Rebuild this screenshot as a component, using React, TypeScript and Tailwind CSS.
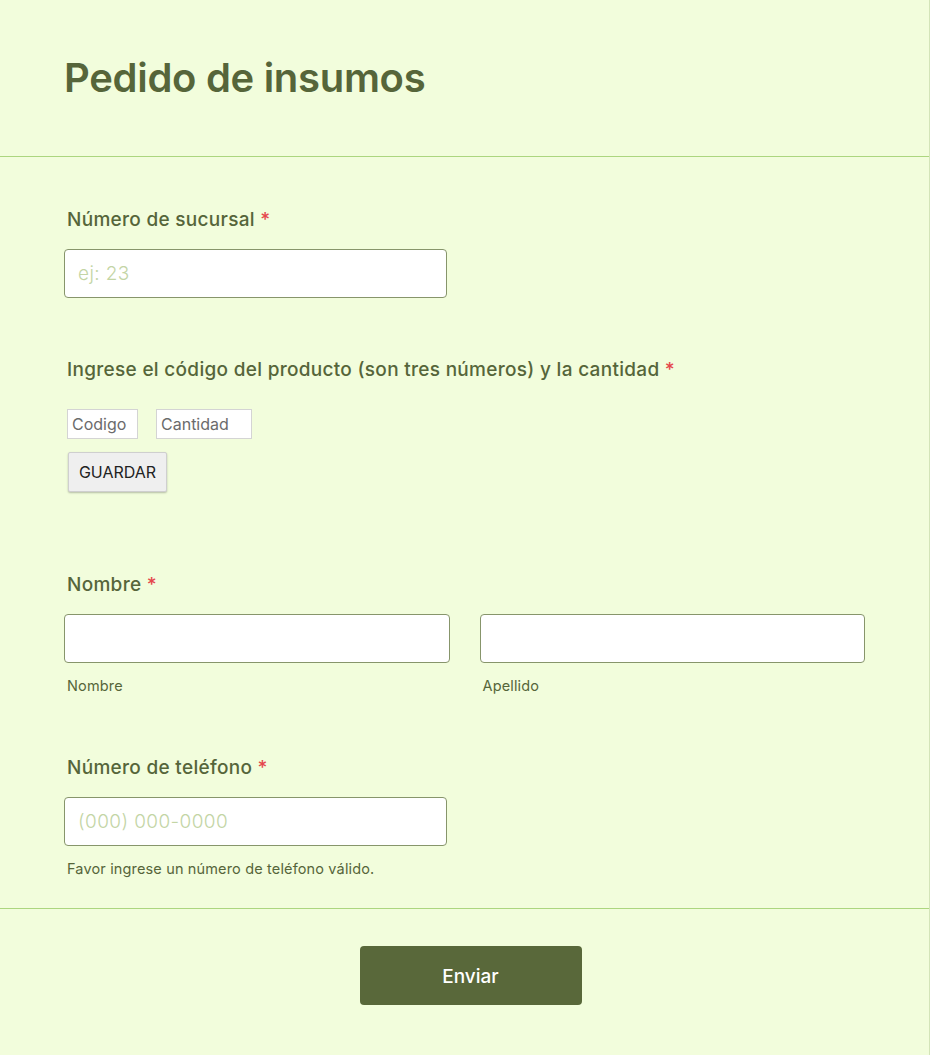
const olive = "text-[#56653a]";

function Label({ children }: { children: React.ReactNode }) {
  return (
    <label className={`block text-[19px] leading-6 font-medium tracking-[0.3px] ${olive}`}>
      {children} <span className="text-[#e5484d]">*</span>
    </label>
  );
}

export default function App() {
  return (
    <div className="min-h-[1055px] w-[930px] bg-[#f2fddc] border-r border-[#d3e4b8] font-['Inter',sans-serif]">
      <header className="h-[157px] flex items-center px-16 border-b border-[#acd67f]">
        <h1 className={`text-[40px] font-semibold tracking-[-0.3px] ${olive}`}>Pedido de insumos</h1>
      </header>

      <div className="px-16 pt-[51px] pb-[29px] border-b border-[#acd67f]">
        <div className="pl-[3px]">
          <Label>Número de sucursal</Label>
        </div>
        <input
          className="mt-[17px] block w-[383px] h-[49px] rounded-[4px] border border-[#87956b] bg-white px-[13px] text-[19px] tracking-[0.4px] font-light placeholder:text-[#c3d5a5] outline-none"
          placeholder="ej: 23"
        />

        <div className="mt-[60px] pl-[3px]">
          <Label>Ingrese el código del producto (son tres números) y la cantidad</Label>
          <div className="mt-[27px] flex gap-[18px]">
            <input
              className="w-[71px] h-[30px] border border-[#d4d4d4] bg-white px-[4px] text-[16px] text-[#555] placeholder:text-[#6b6b6b] outline-none"
              placeholder="Codigo"
            />
            <input
              className="w-[96px] h-[30px] border border-[#d4d4d4] bg-white px-[4px] text-[16px] text-[#555] placeholder:text-[#6b6b6b] outline-none"
              placeholder="Cantidad"
            />
          </div>
          <button className="mt-[13px] ml-px w-[99px] h-[40px] rounded-[2px] border border-[#cfcfcf] bg-[#efefef] shadow-[0_1px_2px_rgba(0,0,0,0.25)] text-[16px] text-[#222]">
            GUARDAR
          </button>
        </div>

        <div className="mt-[81px] pl-[3px]">
          <Label>Nombre</Label>
        </div>
        <div className="mt-[17px] flex gap-[30px] w-[801px]">
          <div className="flex-1">
            <input className="block w-full h-[49px] rounded-[4px] border border-[#87956b] bg-white outline-none" />
            <p className={`mt-[13px] pl-[3px] text-[14.5px] leading-5 tracking-[0.15px] ${olive}`}>Nombre</p>
          </div>
          <div className="flex-1">
            <input className="block w-full h-[49px] rounded-[4px] border border-[#87956b] bg-white outline-none" />
            <p className={`mt-[13px] pl-[3px] text-[14.5px] leading-5 tracking-[0.15px] ${olive}`}>Apellido</p>
          </div>
        </div>

        <div className="mt-[60px] pl-[3px]">
          <Label>Número de teléfono</Label>
        </div>
        <input
          className="mt-[17px] block w-[383px] h-[49px] rounded-[4px] border border-[#87956b] bg-white px-[13px] text-[19px] tracking-[0.4px] font-light placeholder:text-[#c3d5a5] outline-none"
          placeholder="(000) 000-0000"
        />
        <p className={`mt-[13px] pl-[3px] text-[14.5px] leading-5 tracking-[0.15px] ${olive}`}>
          Favor ingrese un número de teléfono válido.
        </p>
      </div>

      <div className="flex justify-center pt-[37px] pb-[50px] pl-[12px]">
        <button className="w-[222px] h-[59px] rounded-[4px] bg-[#59683a] pt-[3px] text-white text-[19px] font-medium">
          Enviar
        </button>
      </div>
    </div>
  );
}
